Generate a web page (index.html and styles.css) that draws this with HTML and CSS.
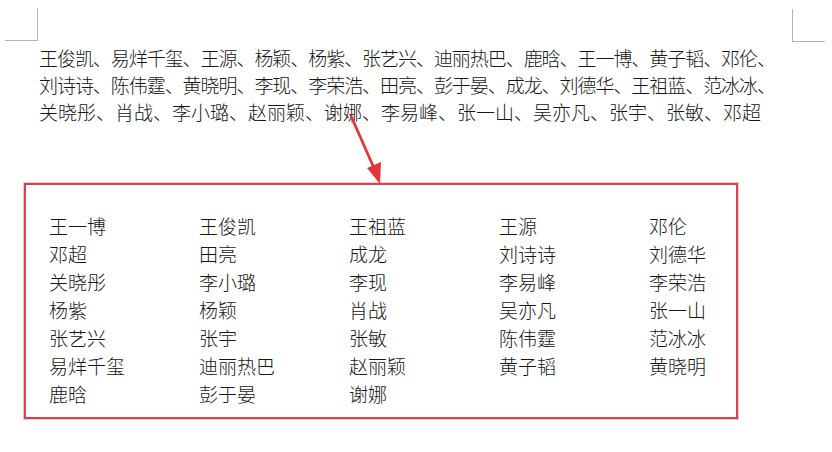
FILE: index.html
```html
<!DOCTYPE html>
<html lang="zh-CN">
<head>
<meta charset="utf-8">
<title>名单</title>
<link rel="stylesheet" href="styles.css">
</head>
<body>
<div class="page">
  <span class="corner corner-left"></span>
  <span class="corner corner-right"></span>
  <p class="names">
    <span class="line tight">王俊凯、易烊千玺、王源、杨颖、杨紫、张艺兴、迪丽热巴、鹿晗、王一博、黄子韬、邓伦、</span>
    <span class="line tight">刘诗诗、陈伟霆、黄晓明、李现、李荣浩、田亮、彭于晏、成龙、刘德华、王祖蓝、范冰冰、</span>
    <span class="line">关晓彤、肖战、李小璐、赵丽颖、谢娜、李易峰、张一山、吴亦凡、张宇、张敏、邓超</span>
  </p>
  <svg class="arrow" width="832" height="200" viewBox="0 0 832 200">
    <line x1="351" y1="116" x2="374" y2="168" stroke="#e0373c" stroke-width="2.8" stroke-linecap="round"/>
    <polygon points="380,184 367,168 381,162" fill="#e0373c"/>
  </svg>
  <div class="box">
    <div class="grid">
      <span>王一博</span><span>王俊凯</span><span>王祖蓝</span><span>王源</span><span>邓伦</span>
      <span>邓超</span><span>田亮</span><span>成龙</span><span>刘诗诗</span><span>刘德华</span>
      <span>关晓彤</span><span>李小璐</span><span>李现</span><span>李易峰</span><span>李荣浩</span>
      <span>杨紫</span><span>杨颖</span><span>肖战</span><span>吴亦凡</span><span>张一山</span>
      <span>张艺兴</span><span>张宇</span><span>张敏</span><span>陈伟霆</span><span>范冰冰</span>
      <span>易烊千玺</span><span>迪丽热巴</span><span>赵丽颖</span><span>黄子韬</span><span>黄晓明</span>
      <span>鹿晗</span><span>彭于晏</span><span>谢娜</span>
    </div>
  </div>
</div>
</body>
</html>
```
FILE: styles.css
```css
html, body {
  margin: 0;
  padding: 0;
  background: #ffffff;
}
body {
  font-family: "Noto Sans CJK SC", "Noto Sans", sans-serif;
  font-weight: 300;
  color: #161616;
}
.page {
  position: relative;
  width: 832px;
  height: 452px;
  padding: 44px 0 0 24px;
  box-sizing: border-box;
  overflow: hidden;
}
.corner {
  position: absolute;
  width: 32px;
  height: 32px;
  border-color: #b4b4b4;
  border-style: solid;
  border-width: 0;
}
.corner-left {
  left: 5px;
  top: 8px;
  border-right-width: 1px;
  border-bottom-width: 1px;
}
.corner-right {
  left: 792px;
  top: 9px;
  border-left-width: 1px;
  border-bottom-width: 1px;
}
.names {
  margin: 0 0 0 15px;
  font-size: 19px;
  line-height: 27px;
  white-space: nowrap;
}
.line {
  display: block;
}
.line.tight {
  letter-spacing: -1.05px;
}
.arrow {
  position: absolute;
  left: 0;
  top: 0;
}
.box {
  margin-top: 58px;
  width: 714px;
  height: 236px;
  box-sizing: border-box;
  border: 2px solid #cf4550;
  box-shadow: 0 0 0 1px rgba(236, 150, 158, 0.55);
  padding: 27px 0 0 23px;
}
.grid {
  display: grid;
  grid-template-columns: repeat(5, 150px);
  grid-auto-rows: 28px;
  font-size: 19px;
  line-height: 28px;
}
```
